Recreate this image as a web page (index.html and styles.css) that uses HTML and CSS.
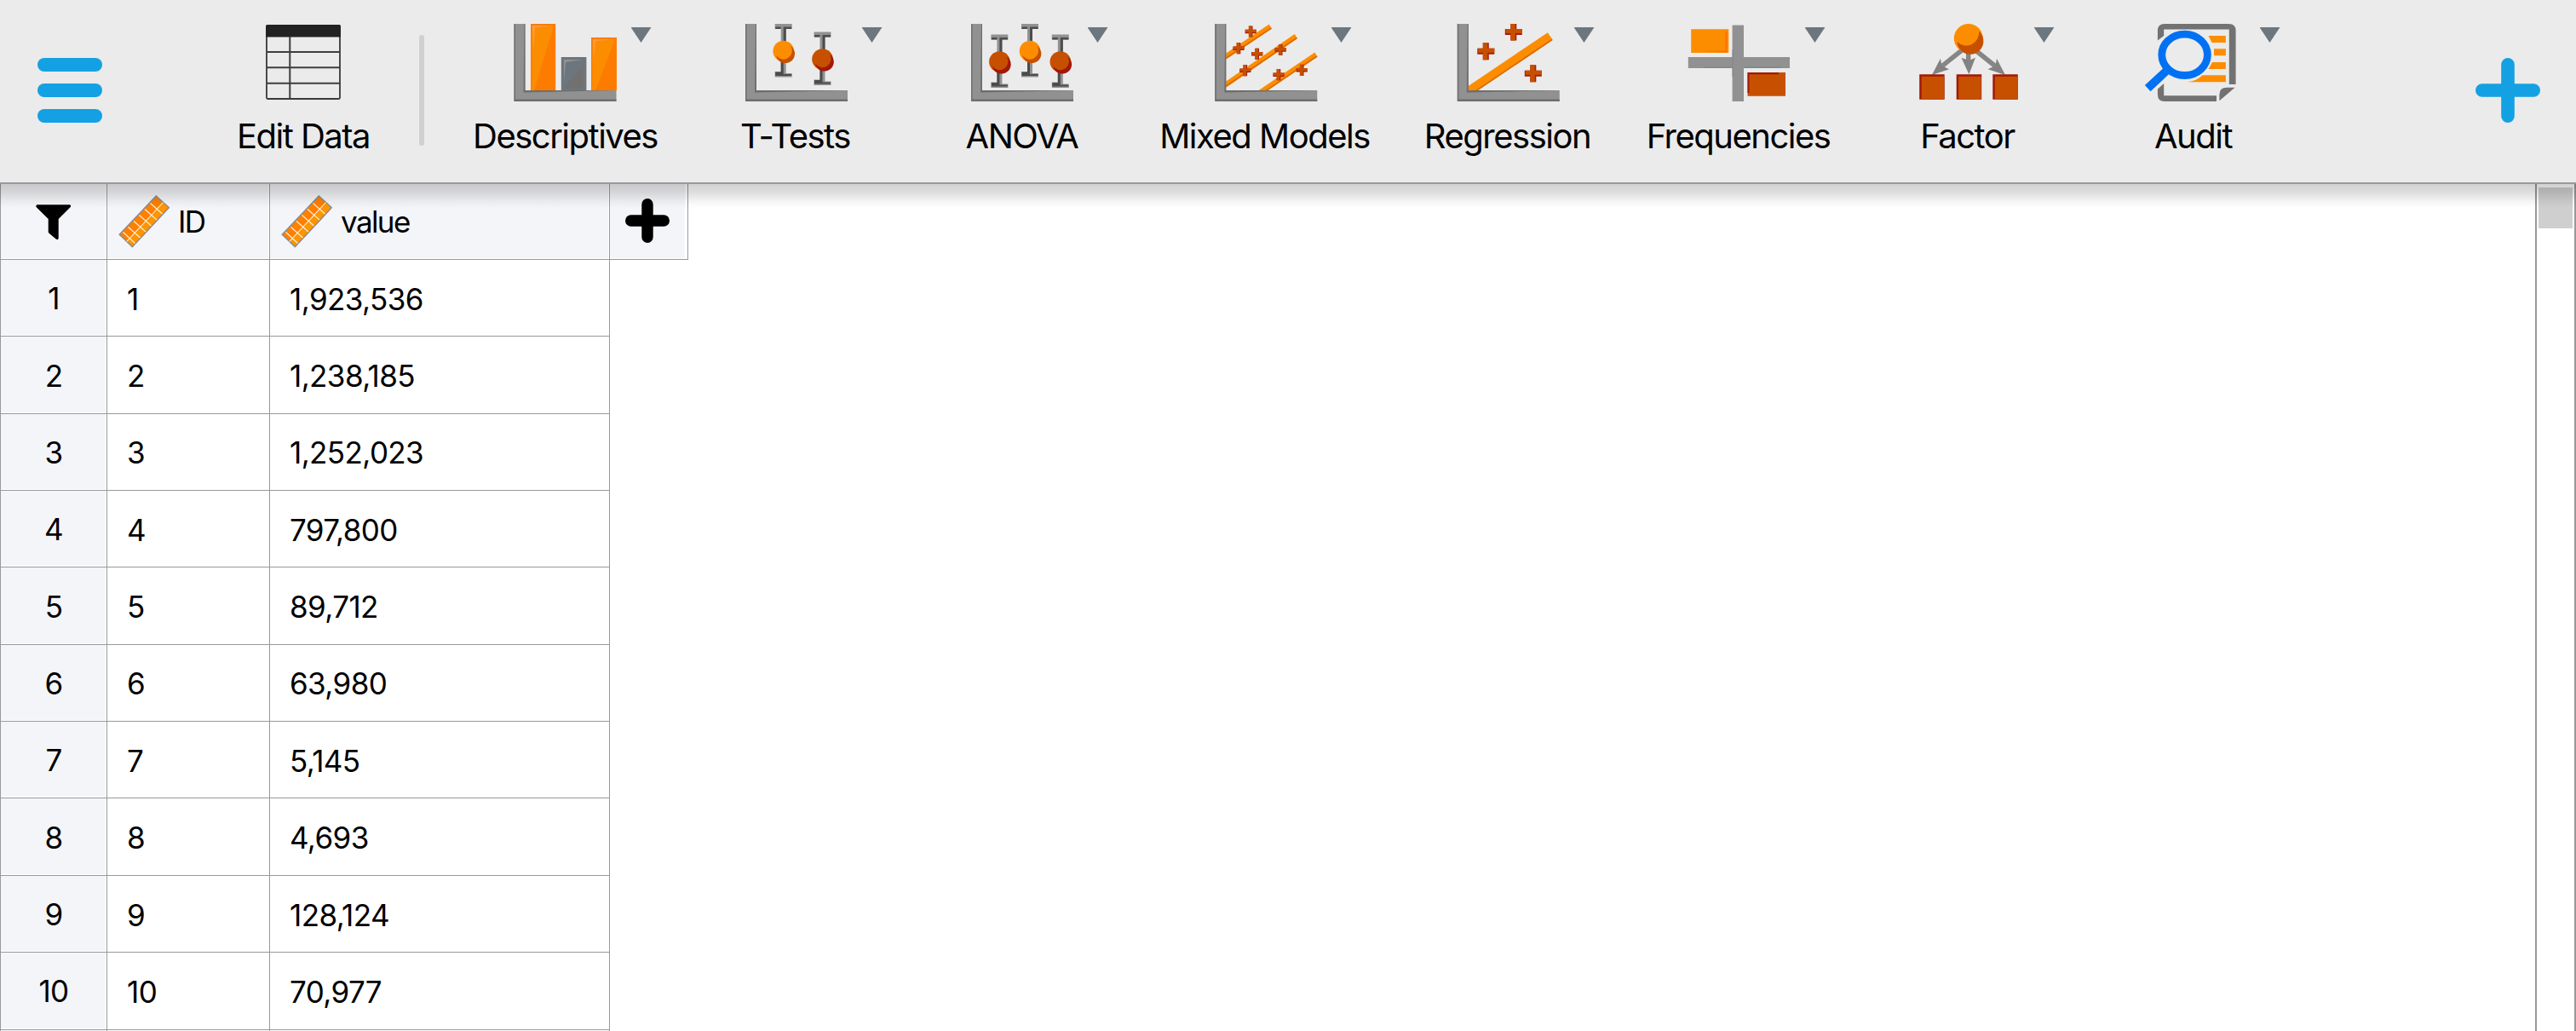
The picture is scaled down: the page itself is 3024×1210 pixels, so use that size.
FILE: index.html
```html
<!DOCTYPE html>
<html lang="en">
<head>
<meta charset="utf-8">
<title>Data</title>
<link rel="stylesheet" href="styles.css">
</head>
<body>
<svg class="defs" width="0" height="0" aria-hidden="true">
  <defs>
    <g id="axis">
      <path d="M0 0H13V78H120V91H0Z" fill="#919191"/>
      <path d="M0 0H1.5V88.500H120V91H0Z" fill="#6e6e6e"/>
      <path d="M12 0H13V78H120L13 80.500H11Z" fill="#6e6e6e"/>
    </g>
    <g id="whisker">
      <path d="M-10 -32H10V-26H3V26H10V30.500H-10V24H-3V-26H-10Z" fill="#929292"/>
      <path d="M-9.500 -28.500H-3V-26H-9.500ZM0 -28.500H9.500V-26H3V-10H0ZM-3 10H0V27H9.500V29H-9.500V24.500H-3Z" fill="#4c4c4c"/>
    </g>
    <g id="whisker-light"><use href="#whisker"/><circle r="12.300" fill="#fd8d00"/><path d="M8.500 -6A11 11 0 1 1 -8.500 5A10 10 0 0 0 8.500 -6Z" fill="#c65000"/></g>
    <g id="whisker-dark"><use href="#whisker"/><circle r="12.300" fill="#c65000"/><path d="M8.500 -6A11 11 0 1 1 -8.500 5A10 10 0 0 0 8.500 -6Z" fill="#a3170a"/></g>
    <g id="cross">
      <path d="M-3.500 -10H3.500V-3.500H10V3.500H3.500V10H-3.500V3.500H-10V-3.500H-3.500Z" fill="#a81c0e"/>
      <path d="M-3.500 -10H2V-3.500H10V1.500H2V10H-3.500V1.500H-9V-3.500H-3.500Z" fill="#c65000"/>
    </g>
    <g id="box"><path d="M0 0H29.500V29.500H0Z" fill="#a3170a"/><path d="M2.500 2.500H29V29H2.500Z" fill="#c65000"/></g>
    <g id="ruler">
      <path d="M44.300 1L59.300 14.700L16.300 60.700L1.300 46.300Z" fill="#ff7f00" stroke="#8e8e8e" stroke-width="1.600"/>
      <path d="M53 9.200L58 14.700L16.300 59.300L10.500 54Z" fill="#fd9500"/>
      <path d="M52.500 8.700L9.800 54.300M37.500 9.500L51.500 22M31 16.500L45 29M24.500 23.500L38.500 36M18 30.500L32 43M11.500 37.500L25.500 50M5.500 43.500L19.500 56.500" stroke="#fff3dc" stroke-width="1.100" fill="none"/>
    </g>
  </defs>
</svg>

<header class="toolbar">
  <button class="menu" aria-label="Menu"><span></span><span></span><span></span></button>
  <div class="module module-edit">
    <svg class="icon-table" viewBox="0 0 88 88">
      <rect x="1" y="1" width="86" height="86" rx="1.500" fill="none" stroke="#3a3a3a" stroke-width="1.800"/>
      <path d="M0 2Q0 0 2 0H86Q88 0 88 2V14.500H0Z" fill="#222"/>
      <path d="M1 32H87M1 50.300H87M1 68.700H87M28.300 14V87" stroke="#3f3d3e" stroke-width="2"/>
    </svg>
    <span class="label">Edit Data</span>
  </div>
  <div class="separator"></div>

  <div class="module m-desc">
    <svg class="icon" viewBox="0 0 120 92">
      <use href="#axis" x="-0.500"/>
      <path d="M19 0H48.200V78H19Z" fill="#fd7c00"/><path d="M20.500 2H46L23 78H20.500Z" fill="#fd8d00"/><path d="M21 2H46L24 4L22 30Z" fill="#ff9d45"/>
      <path d="M54.800 39H84.400V78H54.800Z" fill="#6c767e"/><path d="M81 48V75H58Z" fill="#737170"/><path d="M58 42H80L60 45L58 68Z" fill="#929292"/>
      <path d="M90 16H120V78H90Z" fill="#fd7c00"/><path d="M91.500 18H118L95 78H91.500Z" fill="#fd8d00"/><path d="M92.500 18H118L95 20L93 42Z" fill="#ff9d45"/>
    </svg>
    <span class="caret"></span>
    <span class="label">Descriptives</span>
  </div>
  <div class="module m-ttest">
    <svg class="icon" viewBox="0 0 120 92">
      <use href="#axis" x="1"/>
      <use href="#whisker-light" x="45.700" y="32"/><use href="#whisker-dark" x="91.500" y="41.500"/>
    </svg>
    <span class="caret"></span>
    <span class="label">T-Tests</span>
  </div>
  <div class="module m-anova">
    <svg class="icon" viewBox="0 0 120 92">
      <use href="#axis"/>
      <use href="#whisker-dark" x="33.400" y="44.500"/><use href="#whisker-light" x="69" y="32"/><use href="#whisker-dark" x="104.800" y="44.500"/>
    </svg>
    <span class="caret"></span>
    <span class="label">ANOVA</span>
  </div>
  <div class="module m-mixed">
    <svg class="icon" viewBox="0 0 120 92">
      <g fill="none" stroke="#fd8d00" stroke-width="5.800">
        <path d="M13 39L66.400 3M13 72L96.400 14.500M52 82L120 36"/>
        <path d="M13 41L67.400 5M13 74L97.400 16.500M53 84L121 38" stroke="#d86c00" stroke-width="1.800"/>
      </g>
      <use href="#axis" x="1.300"/>
      <use href="#cross" transform="translate(43.200 9) scale(.66)"/><use href="#cross" transform="translate(29 28.700) scale(.66)"/>
      <use href="#cross" transform="translate(50.700 35.300) scale(.66)"/><use href="#cross" transform="translate(78.200 30.500) scale(.66)"/>
      <use href="#cross" transform="translate(36.800 54.700) scale(.66)"/><use href="#cross" transform="translate(76 59.700) scale(.66)"/>
      <use href="#cross" transform="translate(103.200 54.300) scale(.66)"/>
    </svg>
    <span class="caret"></span>
    <span class="label">Mixed Models</span>
  </div>
  <div class="module m-regr">
    <svg class="icon" viewBox="0 0 120 92">
      <path d="M11 81L109.800 14.500" stroke="#fd8d00" stroke-width="10.500"/>
      <path d="M14 84.500L112 18.500" stroke="#d86c00" stroke-width="1.800"/>
      <use href="#axis" x="0.800"/>
      <use href="#cross" x="66.800" y="9.500"/><use href="#cross" x="34.300" y="32.300"/><use href="#cross" x="89.800" y="58.300"/>
    </svg>
    <span class="caret"></span>
    <span class="label">Regression</span>
  </div>
  <div class="module m-freq">
    <svg class="icon" viewBox="0 0 120 92">
      <path d="M.8 39H120V52H.8Z" fill="#919191"/><path d="M20 50.500H110V52H20Z" fill="#7f878c"/>
      <path d="M52.600 1.500H66V91H52.600Z" fill="#919191"/><path d="M52.600 30H53.600V62H52.600Z" fill="#7f878c"/>
      <path d="M4.200 6.300H48.300V34H4.200Z" fill="#fd8d00"/><path d="M44.500 9V31.800H15L46.300 33.500V9Z" fill="#ff6f00"/>
      <path d="M70.500 57H115V84.700H70.500Z" fill="#c65000"/><path d="M70.500 57H107V59.300H72.500V81H70.500Z" fill="#a3170a"/>
    </svg>
    <span class="caret"></span>
    <span class="label">Frequencies</span>
  </div>
  <div class="module m-factor">
    <svg class="icon" viewBox="0 0 120 92">
      <path d="M53 31L28 51M60.700 33V46M69 31L94 51" stroke="#868686" stroke-width="5.500"/>
      <path d="M17.900 60L27.900 40.700L29.500 49L38.200 53.300ZM61.400 59.300L52.500 39.700L61.400 43L69 39.700ZM104 60L94 40.700L92.500 49L83.600 53.300Z" fill="#828282"/>
      <circle cx="60.800" cy="17" r="17" fill="#fd8d00"/>
      <path d="M73 8.500A15.500 15.500 0 1 1 47.500 21A15 15 0 0 0 73 8.500Z" fill="#c65000"/>
      <use href="#box" x="3.200" y="59.300"/><use href="#box" x="46.700" y="59.300"/><use href="#box" x="89.300" y="59.300"/>
    </svg>
    <span class="caret"></span>
    <span class="label">Factor</span>
  </div>
  <div class="module m-audit">
    <svg class="icon" viewBox="0 0 120 92">
      <path d="M17.900 19.500V8Q17.900 0 26 0H101.500Q109.600 0 109.600 8V71H101.800V6.500H25.200V14Z" fill="#727272"/>
      <path d="M25.200 70V84.300H87V91H26Q17.900 91 17.900 83V76.500Z" fill="#727272"/>
      <path d="M90.400 90.300V83Q90.400 74.700 99 74.700H108.600Z" fill="#727272"/>
      <path d="M77.500 14H97.900V22H81.500ZM84 29.300H97.900V37.300H84ZM82 45H97.900V53H77.500ZM70.400 60.300H97.900V68.300H52.500Q64 67 70.400 60.300Z" fill="#fd8d00"/>
      <ellipse cx="49.600" cy="36.300" rx="26.800" ry="24.200" fill="none" stroke="#0071f3" stroke-width="8.800"/>
      <path d="M30 53.500L6.200 75.600" stroke="#0071f3" stroke-width="9.800"/>
    </svg>
    <span class="caret"></span>
    <span class="label">Audit</span>
  </div>
  <button class="add-module" aria-label="Add module">
    <svg viewBox="0 0 76 76"><path d="M38 7.800V68.200M7.800 38H68.200" stroke="#14a1e3" stroke-width="15.600" stroke-linecap="round"/></svg>
  </button>
</header>

<main class="data">
  <div class="viewport">
    <div class="grid">
      <div class="cell head filter"><svg class="funnel" viewBox="0 0 42 42"><path d="M1.500 .3H40Q42 1.500 40.500 3.300L26.700 17V39.500Q26.300 42 24 40.800L15.300 33.500Q14.700 32.500 14.700 31.500V17L.8 3.300Q-.5 1.300 1.500 .3Z"/></svg></div>
      <div class="cell head"><svg class="ruler" viewBox="0 0 60 62"><use href="#ruler"/></svg><span>ID</span></div>
      <div class="cell head"><svg class="ruler" viewBox="0 0 60 62"><use href="#ruler"/></svg><span>value</span></div>
      <div class="cell head add-column"><svg class="plus" viewBox="0 0 52 52"><path d="M26 6.700V45.300M6.700 26H45.300" stroke="#000" stroke-width="13.400" stroke-linecap="round"/></svg></div>

      <div class="cell row-number">1</div><div class="cell">1</div><div class="cell">1,923,536</div>
      <div class="cell row-number">2</div><div class="cell">2</div><div class="cell">1,238,185</div>
      <div class="cell row-number">3</div><div class="cell">3</div><div class="cell">1,252,023</div>
      <div class="cell row-number">4</div><div class="cell">4</div><div class="cell">797,800</div>
      <div class="cell row-number">5</div><div class="cell">5</div><div class="cell">89,712</div>
      <div class="cell row-number">6</div><div class="cell">6</div><div class="cell">63,980</div>
      <div class="cell row-number">7</div><div class="cell">7</div><div class="cell">5,145</div>
      <div class="cell row-number">8</div><div class="cell">8</div><div class="cell">4,693</div>
      <div class="cell row-number">9</div><div class="cell">9</div><div class="cell">128,124</div>
      <div class="cell row-number">10</div><div class="cell">10</div><div class="cell">70,977</div>
      <div class="cell row-number"></div><div class="cell"></div><div class="cell"></div>
    </div>
  </div>
  <div class="scrollbar"><div class="thumb"></div></div>
  <div class="shadow"></div>
</main>
</body>
</html>
```
FILE: styles.css
```css
* { box-sizing: border-box; }

html, body { height: 100%; }

body {
  margin: 0;
  display: flex;
  flex-direction: column;
  overflow: hidden;
  background: #fff;
  color: #000;
  font-family: Inter, "Liberation Sans", sans-serif;
}

.defs { position: absolute; }

button {
  padding: 0;
  border: 0;
  background: none;
}

/* Toolbar */
.toolbar {
  flex: none;
  display: flex;
  height: 216px;
  padding: 0 42px 0 44px;
  background: #ebebeb;
  border-bottom: 2px solid #999;
}

.menu {
  display: flex;
  flex-direction: column;
  align-self: flex-start;
  justify-content: space-between;
  width: 76px;
  height: 76px;
  margin: 68px 116px 0 0;
}

.menu span {
  height: 15.600px;
  border-radius: 8px;
  background: #14a1e3;
}

.separator {
  width: 6px;
  height: 130px;
  margin: 41px 30px 0 15.500px;
  border-radius: 3px;
  background: #d0d0d0;
}

.module {
  position: relative;
  display: flex;
  flex: none;
  flex-direction: column;
  align-items: center;
  padding-top: 28px;
}

.module-edit { width: 240px; }
.m-desc { width: 272px; }
.m-ttest { width: 268px; }
.m-anova { width: 264px; }
.m-mixed { width: 306px; }
.m-regr { width: 264px; }
.m-freq { width: 278px; }
.m-factor { width: 260px; }
.m-audit { width: 270px; }

.icon {
  width: 120px;
  height: 92px;
  overflow: visible;
  clip-path: inset(0 -4px 0 -4px);
}

.icon-table {
  width: 88px;
  height: 88px;
  margin: 1px 0 3px;
}

.caret {
  position: absolute;
  top: 32px;
  left: calc(50% + 78px);
  width: 24px;
  height: 18px;
  background: #6c767e;
  clip-path: polygon(0 0, 100% 0, 50% 100%);
}

.m-desc .caret,
.m-anova .caret { left: calc(50% + 77px); }

.label {
  margin-top: 16px;
  font-size: 40px;
  line-height: 48px;
  white-space: nowrap;
  letter-spacing: -1.500px;
}

.add-module {
  width: 76px;
  height: 76px;
  margin: 68px 0 0 auto;
}

.add-module svg {
  display: block;
  fill: none;
}

/* Data grid */
.data {
  position: relative;
  flex: 1;
  display: flex;
  min-height: 0;
}

.viewport {
  flex: 1;
  overflow: hidden;
}

.grid {
  display: grid;
  grid-template-columns: 125px 191px 399px 92px;
  grid-template-rows: 89.080px;
  grid-auto-rows: 90.350px;
  width: 808px;
  border-left: 1px solid #999;
}

.cell {
  display: flex;
  align-items: center;
  padding: 2px 0 0 23px;
  border-right: 1px solid #999;
  border-bottom: 1px solid #999;
  font-size: 35px;
  line-height: 42px;
  letter-spacing: -.600px;
}

.cell:nth-child(n + 5):nth-child(3n + 5) { grid-column: 1; }

.head {
  padding: 0 0 0 13px;
  background: #f4f5f8;
  box-shadow: inset -1px -1px #fff;
  letter-spacing: -1.600px;
}

.head span { margin-left: 10px; }

.filter {
  justify-content: center;
  padding: 0;
}

.row-number {
  justify-content: center;
  padding: 1px 0 0;
  background: #f4f5f8;
  box-shadow: inset -1px -1px #fff;
}

.add-column {
  padding: 0 0 0 18px;
  box-shadow: inset -3px -1px #fff;
}

.funnel {
  width: 42px;
  height: 42px;
  margin-top: 2px;
}

.ruler {
  width: 60px;
  height: 62px;
}

.plus {
  width: 52px;
  height: 52px;
  margin-top: -2px;
  fill: none;
}

.scrollbar {
  flex: none;
  width: 48px;
  padding: 4px 2px;
  border: solid #999;
  border-width: 0 2px;
}

.thumb {
  width: 40px;
  height: 48px;
  background: #cfcfcf;
}

.shadow {
  position: absolute;
  inset: 0 0 auto;
  height: 28px;
  background: linear-gradient(rgba(0, 0, 0, .18), rgba(0, 0, 0, .13) 35%, rgba(0, 0, 0, .04) 75%, transparent);
}
```
